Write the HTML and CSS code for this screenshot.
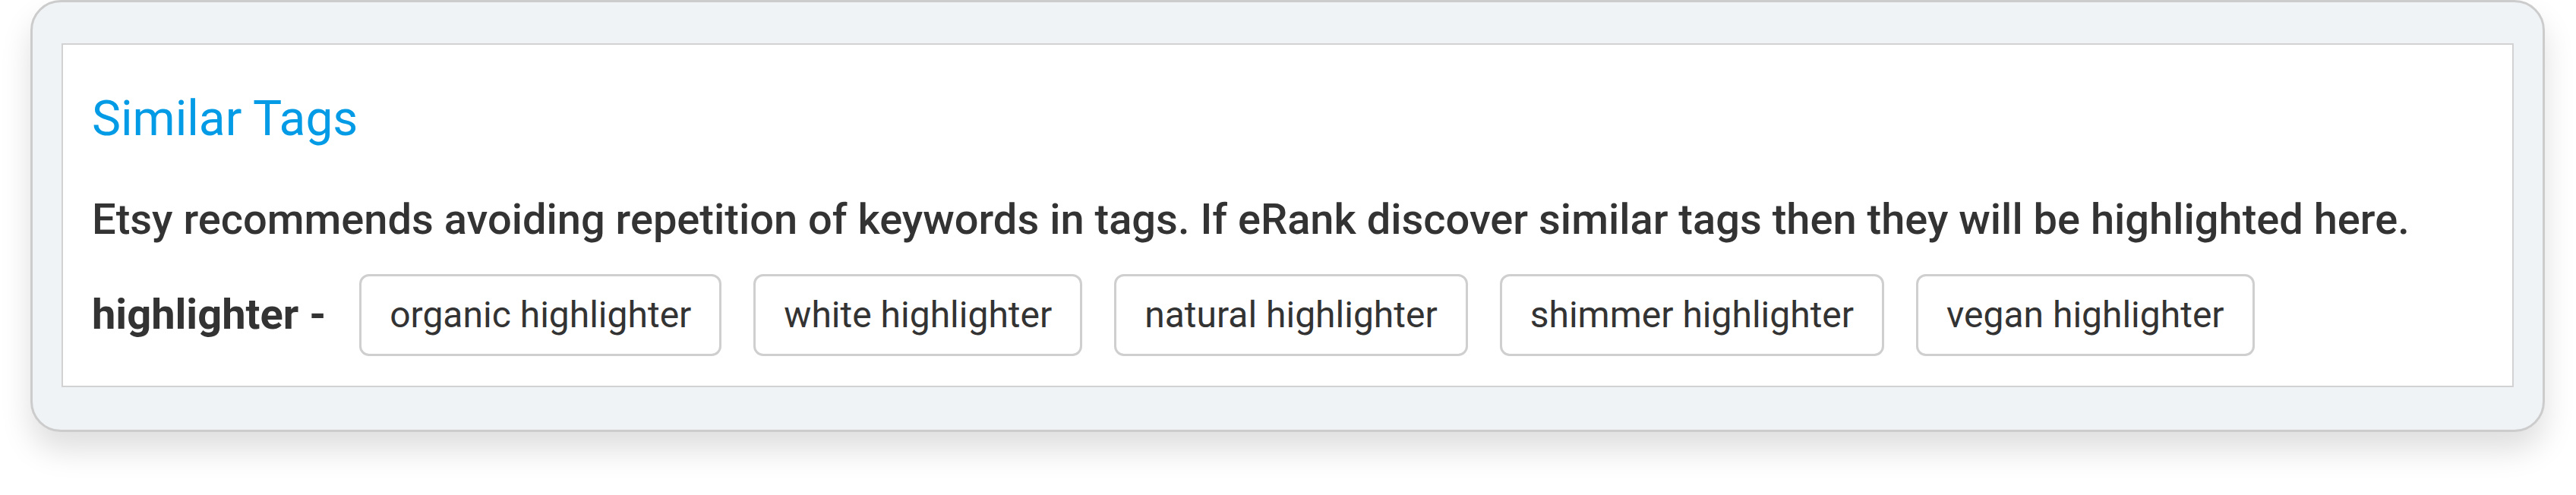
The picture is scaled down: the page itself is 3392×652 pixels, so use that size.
FILE: index.html
```html
<!DOCTYPE html>
<html lang="en">
<head>
    <meta charset="UTF-8">
    <meta name="viewport" content="width=device-width, initial-scale=1.0">
    <title>Similar Tags</title>
    <link rel="stylesheet" href="styles.css">
</head>
<body>
    <div class="card">
        <div class="panel">
            <h2 class="panel-title">Similar Tags</h2>
            <p class="panel-note">Etsy recommends avoiding repetition of keywords in tags. If eRank discover similar tags then they will be highlighted here.</p>

            <div class="tag-row">
                <span class="tag-label">highlighter -</span>
                <span class="tag">organic highlighter</span>
                <span class="tag">white highlighter</span>
                <span class="tag">natural highlighter</span>
                <span class="tag">shimmer highlighter</span>
                <span class="tag">vegan highlighter</span>
            </div>
        </div>
    </div>
</body>
</html>
```

FILE: styles.css
```css
html,
body {
    min-height: 100vh;
}

body {
    margin: 0;
    padding-bottom: 80px;
    box-sizing: border-box;
    background-color: #ffffff;
    font-family: Roboto, "Noto Sans", sans-serif;
    color: #333333;
}

.card {
    margin: 0 41px 0 40px;
    padding: 54px 38px 56px 38px;
    background-color: #eff3f6;
    border: 3px solid #cccccc;
    border-radius: 40px;
    box-shadow: 0 24px 40px rgba(0, 0, 0, 0.13);
}

.panel {
    background-color: #ffffff;
    border: 2px solid #d2d2d2;
    padding: 60px 38px 39px 38px;
}

.panel-title {
    margin: 0 0 60px 0;
    font-size: 64px;
    font-weight: 400;
    line-height: 1.2;
    color: #039be5;
}

.panel-note {
    margin: 0 0 38px 0;
    font-size: 56px;
    font-weight: 500;
    line-height: 1.2;
}

.tag-row {
    display: flex;
    align-items: center;
    gap: 42px;
}

.tag-label {
    font-size: 56px;
    font-weight: 700;
    line-height: 1.2;
    margin-right: 2px;
}

.tag {
    display: inline-block;
    padding: 22px 37px;
    border: 3px solid #cfcfcf;
    border-radius: 13px;
    font-size: 48px;
    line-height: 1.2;
}
```
